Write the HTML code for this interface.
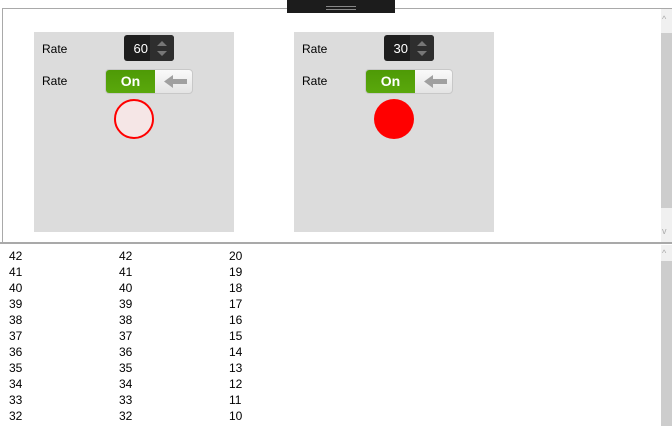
<!DOCTYPE html>
<html><head><style>
*{margin:0;padding:0;box-sizing:border-box}
body{width:672px;height:426px;background:#fff;position:relative;overflow:hidden;font-family:"Liberation Sans",sans-serif;font-size:12px;color:#000}
.abs{position:absolute}
.panel{position:absolute;top:32px;width:200px;height:200px;background:#dcdcdc}
.lbl{position:absolute;left:8px;font-size:12px}
.spin{position:absolute;top:3px;width:50px;height:26px;background:#1e1e1e;border-radius:3px;overflow:hidden}
.spin .v{position:absolute;right:26px;top:6px;color:#fff;font-size:13px}
.spin .b{position:absolute;right:0;top:0;width:24px;height:26px;background:#2e2e2e}
.tog{position:absolute;top:37px;width:88px;height:25px;border:1px solid #c8c8c8;border-radius:4px;overflow:hidden;background:linear-gradient(#fafafa,#e4e4e4)}
.tog .g{position:absolute;left:0;top:0;width:49px;height:23px;background:linear-gradient(#4e9a06,#5aa80c);color:#fff;font-weight:bold;font-size:14px;text-align:center;line-height:23px}
.row{position:absolute;left:9px;font-size:12px;line-height:16px}
</style></head><body>
<div class="abs" style="left:2px;top:8px;width:670px;height:1px;background:#a9a9a9"></div>
<div class="abs" style="left:2px;top:8px;width:1px;height:234px;background:#a9a9a9"></div>
<div class="abs" style="left:287px;top:0;width:108px;height:13px;background:#1c1c1c"></div>
<div class="abs" style="left:326px;top:6px;width:30px;height:1px;background:#888"></div>
<div class="abs" style="left:326px;top:9px;width:30px;height:1px;background:#888"></div>

<div class="abs" style="left:661px;top:9px;width:11px;height:233px;background:#f0f0f0"></div>
<div class="abs" style="left:661px;top:33px;width:11px;height:175px;background:#cdcdcd"></div>
<div class="abs" style="left:662px;top:14px;font-size:9px;color:#aaa">^</div>
<div class="abs" style="left:662px;top:226px;font-size:9px;color:#aaa">v</div>

<div class="panel" style="left:34px">
<div class="lbl" style="top:10px">Rate</div>
<div class="spin" style="left:90px"><div class="v">60</div><div class="b"><svg width="24" height="26"><path d="M7 11 L12 6 L17 11Z M7 16 L17 16 L12 21Z" fill="#777"/></svg></div></div>
<div class="lbl" style="top:42px">Rate</div>
<div class="tog" style="left:71px"><div class="g">On</div><svg class="abs" style="left:55px;top:4px" width="30" height="15"><path d="M3 7.5 L12 1 L12 5 L26 5 L26 10 L12 10 L12 14Z" fill="#a0a0a0"/></svg></div>
<div class="abs" style="left:80px;top:67px;width:40px;height:40px;border-radius:50%;border:2px solid #f00;background:#f5e6e6"></div>
</div>

<div class="panel" style="left:294px">
<div class="lbl" style="top:10px">Rate</div>
<div class="spin" style="left:90px"><div class="v">30</div><div class="b"><svg width="24" height="26"><path d="M7 11 L12 6 L17 11Z M7 16 L17 16 L12 21Z" fill="#777"/></svg></div></div>
<div class="lbl" style="top:42px">Rate</div>
<div class="tog" style="left:71px"><div class="g">On</div><svg class="abs" style="left:55px;top:4px" width="30" height="15"><path d="M3 7.5 L12 1 L12 5 L26 5 L26 10 L12 10 L12 14Z" fill="#a0a0a0"/></svg></div>
<div class="abs" style="left:80px;top:67px;width:40px;height:40px;border-radius:50%;background:#f00"></div>
</div>

<div class="abs" style="left:0;top:242px;width:672px;height:2px;background:#a9a9a9"></div>
<div class="abs" style="left:661px;top:245px;width:11px;height:181px;background:#f0f0f0"></div>
<div class="abs" style="left:661px;top:261px;width:11px;height:165px;background:#cdcdcd"></div>
<div class="abs" style="left:662px;top:248px;font-size:9px;color:#aaa">^</div>

<div class="abs" style="left:9px;top:248px;line-height:16px">42<br>41<br>40<br>39<br>38<br>37<br>36<br>35<br>34<br>33<br>32</div>
<div class="abs" style="left:119px;top:248px;line-height:16px">42<br>41<br>40<br>39<br>38<br>37<br>36<br>35<br>34<br>33<br>32</div>
<div class="abs" style="left:229px;top:248px;line-height:16px">20<br>19<br>18<br>17<br>16<br>15<br>14<br>13<br>12<br>11<br>10</div>
</body></html>
